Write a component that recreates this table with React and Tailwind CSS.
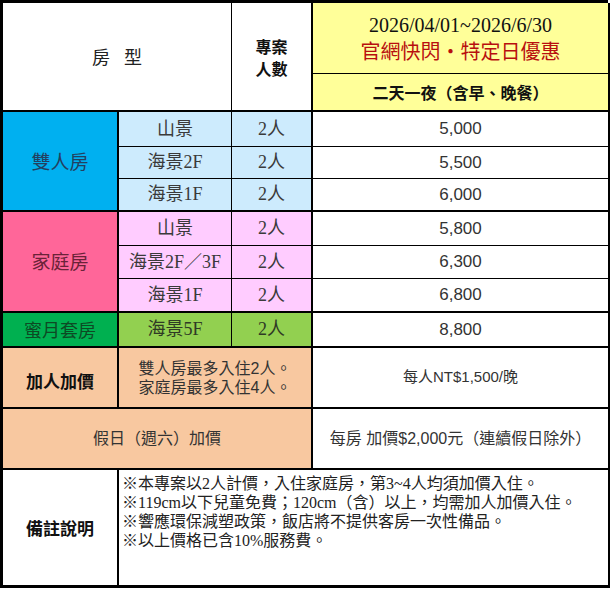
const SERIF = "font-['Liberation_Serif','Noto_Sans_CJK_TC',serif]";
const SANS = "font-['Liberation_Sans','Noto_Sans_CJK_TC',sans-serif]";
const CJK = "font-['Noto_Sans_CJK_TC',sans-serif]";

const center = 'flex items-center justify-center text-center';

function Cell({ className = '', children }) {
  return <div className={`${center} border-black ${className}`}>{children}</div>;
}

const rooms = [
  {
    name: '雙人房',
    main: 'bg-[#00b0f0] text-[#23405f]',
    sub: 'bg-[#cdebfd]',
    rows: [
      { view: '山景', price: '5,000' },
      { view: '海景2F', price: '5,500' },
      { view: '海景1F', price: '6,000' },
    ],
  },
  {
    name: '家庭房',
    main: 'bg-[#ff6699] text-[#6a2238]',
    sub: 'bg-[#ffccff]',
    rows: [
      { view: '山景', price: '5,800' },
      { view: '海景2F／3F', price: '6,300' },
      { view: '海景1F', price: '6,800' },
    ],
  },
];

const notes = [
  '※本專案以2人計價，入住家庭房，第3~4人均須加價入住。',
  '※119cm以下兒童免費；120cm（含）以上，均需加人加價入住。',
  '※響應環保減塑政策，飯店將不提供客房一次性備品。',
  '※以上價格已含10%服務費。',
];

export default function App() {
  return (
    <div className="bg-white w-[610px] h-[589px]">
      <div
        className={`grid w-[608px] grid-cols-[116px_113px_81px_298px] grid-rows-[71px_38px_35px_32px_33px_34px_33px_34px_35px_61px_61px_118px] border-l-[3px] border-t-[3px] border-black text-[#333] ${CJK}`}
      >
        {/* header */}
        <Cell className="col-span-2 row-span-2 border-r border-b-2 bg-white text-[18px] text-[#222] gap-[14px]">
          <span>房</span>
          <span>型</span>
        </Cell>
        <Cell className="row-span-2 border-r-2 border-b-2 bg-white flex-col font-bold text-[16px] leading-[22px] text-[#111]">
          <span>專案</span>
          <span>人數</span>
        </Cell>
        <Cell className="flex-col border-r-[3px] border-b bg-[#ffff99] leading-[26px]">
          <span className={`${SERIF} text-[20px] text-[#111]`}>2026/04/01~2026/6/30</span>
          <span className="text-[20px] text-[#b80f0f]">官網快閃・特定日優惠</span>
        </Cell>
        <Cell className="border-r-[3px] border-b-2 bg-[#ffff99] font-bold text-[16px] text-[#111]">
          二天一夜（含早、晚餐）
        </Cell>

        {/* room rows */}
        {rooms.map((room) => (
          <Room key={room.name} room={room} />
        ))}

        <Cell className="border-r-2 border-b-2 bg-[#00b050] text-[18px] text-[#0d4a24]">
          蜜月套房
        </Cell>
        <Cell className={`border-r border-b-2 bg-[#92d050] text-[18px] text-[#2f3a25] ${SERIF}`}>
          海景5F
        </Cell>
        <Cell className={`border-r-2 border-b-2 bg-[#92d050] text-[18px] text-[#2f3a25] ${SERIF}`}>
          2人
        </Cell>
        <Cell className={`border-r-[3px] border-b-2 bg-white text-[17px] font-light ${SANS}`}>8,800</Cell>

        {/* extra person */}
        <Cell className="border-r-2 border-b-2 bg-[#f8c8a0] pt-[6px] font-bold text-[17px] text-[#111]">
          加人加價
        </Cell>
        <Cell className={`col-span-2 flex-col border-r-2 border-b-2 bg-[#f8c8a0] text-[16px] leading-[19px] ${SANS}`}>
          <span>雙人房最多入住2人。</span>
          <span>家庭房最多入住4人。</span>
        </Cell>
        <Cell className={`border-r-[3px] border-b-2 bg-white text-[15px] ${SANS}`}>
          每人NT$1,500/晚
        </Cell>

        <Cell className={`col-span-3 border-r-2 border-b-2 bg-[#f8c8a0] text-[16px] ${SANS}`}>
          假日（週六）加價
        </Cell>
        <Cell className={`border-r-[3px] border-b-2 bg-white text-[16px] ${SANS}`}>
          每房 加價$2,000元（連續假日除外）
        </Cell>

        {/* notes */}
        <Cell className="border-r-2 border-b-[3px] bg-white font-bold text-[17px] text-[#111]">
          備註說明
        </Cell>
        <div
          className={`col-span-3 border-r-[3px] border-b-[3px] border-black bg-white pl-[3px] pt-[4px] text-[16px] leading-[19px] text-[#222] ${SERIF}`}
        >
          {notes.map((n) => (
            <div key={n} className="whitespace-nowrap">
              {n}
            </div>
          ))}
        </div>
      </div>
    </div>
  );
}

function Room({ room }) {
  return (
    <>
      {room.rows.map((r, i) => {
        const last = i === room.rows.length - 1;
        const b = last ? 'border-b-2' : 'border-b';
        return <RoomRow key={r.view} first={i === 0} room={room} r={r} b={b} />;
      })}
    </>
  );
}

function RoomRow({ first, room, r, b }) {
  return (
    <>
      {first && (
        <Cell className={`row-span-3 border-r-2 border-b-2 text-[19px] ${room.main}`}>{room.name}</Cell>
      )}
      <Cell className={`border-r ${b} text-[18px] text-[#3a3a3a] ${room.sub} ${SERIF}`}>{r.view}</Cell>
      <Cell className={`border-r-2 ${b} text-[18px] text-[#3a3a3a] ${room.sub} ${SERIF}`}>2人</Cell>
      <Cell className={`border-r-[3px] ${b} bg-white text-[17px] font-light ${SANS}`}>{r.price}</Cell>
    </>
  );
}
